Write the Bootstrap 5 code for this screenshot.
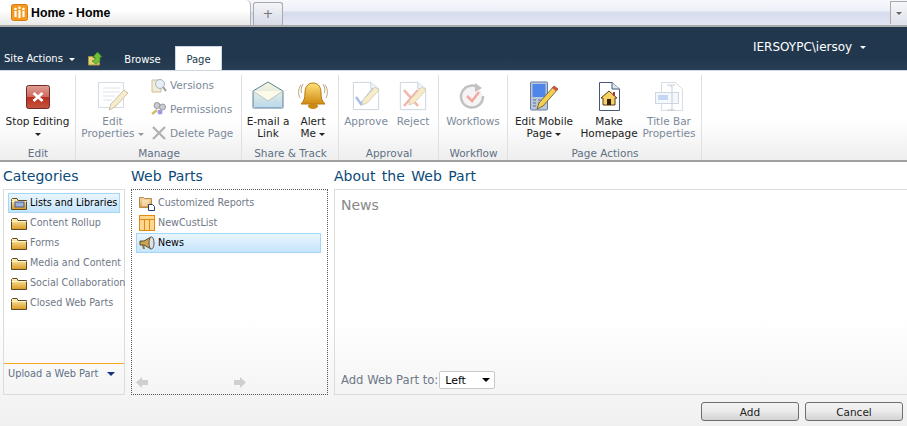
<!DOCTYPE html>
<html lang="en"><head><meta charset="utf-8"><title>Home - Home</title>
<link href="https://cdn.jsdelivr.net/npm/bootstrap@5.3.0/dist/css/bootstrap.min.css" rel="stylesheet">
<style>
html,body{width:907px;height:426px;overflow:hidden;margin:0}
body{font-family:"DejaVu Sans",sans-serif;font-size:10.5px;line-height:12px;color:#222;background:#fff}
.tabstrip{height:27px;background:linear-gradient(#f7f8fc 0,#eef0f8 42%,#d7dcee 50%,#dfe3f2 90%);border-bottom:2px solid #a9a9a9}
.hometab{width:251px;height:25px;background:linear-gradient(#fff,#fff 40%,#e9e9e9);border:1px solid #b4b4b4;border-top:0;border-left:0;border-bottom:0;border-top-right-radius:5px;padding-left:11px;gap:3px;font:700 12.3px/16px "Liberation Sans",sans-serif;color:#000}
.plustab{width:30px;height:23px;margin:2px 0 0 2px;background:linear-gradient(#f4f5f9,#d8dbe6);border:1px solid #a8a8b0;border-bottom:0;border-radius:3px 3px 0 0;color:#777;font-size:13px}
.menutab{width:17px;height:23px;margin-top:1px;background:linear-gradient(#f6f7fa,#dfe2ea);border:1px solid #aaa;border-right:0;border-bottom:0}
.tri{width:0;height:0;border-left:3px solid transparent;border-right:3px solid transparent;border-top:3px solid #222;display:inline-block;vertical-align:middle}
.tri-w{border-top-color:#fff}.tri-g{border-top-color:#999}.tri-m{border-top-color:#666}
.topband{height:44px;background:linear-gradient(#21374d 70%,#273e55);color:#fff;border-bottom:1px solid #cfd8e2}
.actions{padding-left:4px;width:88px;height:12px;margin-bottom:5px;white-space:nowrap;font-size:10px}
.actions .tri{margin-left:3px}
.upicon{margin:0 0 4px 0;flex:none}
.browsetab{width:65px;margin-left:6px;text-align:center;margin-bottom:4px;font-size:10px}
.pagetab{width:47px;height:24px;margin-top:20px;background:#fff;color:#21374d;border:1px solid #cfd8e2;border-bottom:0;text-align:center;padding-top:7px;font-size:10px}
.userbox{position:absolute;left:753px;top:14px;white-space:nowrap;font-size:12px}
.ribbon{height:91px;background:linear-gradient(#fff 55%,#eeeeee);border-bottom:2px solid #a0a0a0}
.rgroup{height:90px;padding-top:4px;position:relative}
.rgroup::after{content:"";position:absolute;right:0;top:4px;bottom:1px;width:1px;background:#e0e0e0}
.g1{width:76px}.g2{width:166px}.g3{width:97px}.g4{width:100px}.g5{width:69px}.g6{width:194px}
.rrow{height:72px}
.rlabel{text-align:center;color:#5f7085}
.bigbtn{text-align:center;padding-top:7px;flex:none;line-height:12px;white-space:nowrap}
.bigbtn svg{display:block;margin:-1px auto 4px}
.bigbtn .stopicon{margin:3px auto 6px}
.off{color:#7d8a9a}
.w75{width:75px}.w73{width:73px}.w52{width:52px}.w38{width:38px}.w54{width:54px}.w40{width:40px}.w68{width:68px}.w72{width:72px}.w58{width:58px}.w62{width:62px}
.smallbtn{height:20px;margin-bottom:4px;padding-left:2px;white-space:nowrap;gap:3px}
.mainzone{height:264px;background:linear-gradient(#fff 60%,#f0f0f0 100%)}
.colhead{font-size:14px;line-height:18px;color:#0b4a78;height:27px;padding-top:5px;word-spacing:2px}
.colcat{width:122px;margin-left:3px}.colparts{width:197px;margin-left:6px}.colabout{margin-left:6px;flex:1}
.panelbox{height:206px;border:1px solid #dcdcdc;position:relative;font-size:9.8px}
.catlist{height:174px;border-bottom:1px solid #f5a623;padding:3px 0 0 4px}
.rowitem{height:20px;padding-left:2px;white-space:nowrap;color:#6f7887;gap:3px;width:112px;border:1px solid transparent;font-size:9.6px}
.rowitem svg{flex:none}
.picked{background:linear-gradient(#eaf6fe,#c4e4fb);border-color:#a6d6f6;color:#000}
.uploadrow{height:31px;padding:4px 0 0 4px;color:#5f7085;white-space:nowrap}
.uploadrow .tri{border-left-width:4px;border-right-width:4px;border-top:4px solid #13317f;margin-left:5px}
.partbox{height:206px;border:1px dotted #555;padding:3px 4px;position:relative}
.partbox .rowitem{width:185px}
.pagers{position:absolute;left:4px;top:187px;width:110px}
.aboutbox{height:206px;border:1px solid #dcdcdc;border-right:0;padding:7px 6px;position:relative}
.newsname{font-size:14px;line-height:17px;color:#888}
.addrow{position:absolute;left:6px;top:181px;color:#6f7887;font-size:11.6px;gap:1px}
.spot{width:56px;height:18px;padding:0 0 0 5px;border:1px solid #c8c8c8;border-radius:2px;font-size:11px;font-family:"DejaVu Sans",sans-serif;line-height:15px;color:#000;background-size:8px 4px;background-position:right 4px center;background-image:url("data:image/svg+xml,%3Csvg xmlns='http://www.w3.org/2000/svg' viewBox='0 0 8 4'%3E%3Cpath d='M0 0h8L4 4z'/%3E%3C/svg%3E")}
.footbtns{height:32px;padding:7px 4px 0 0;gap:6px}
.actbtn{width:98px;height:19px;padding:0;font:400 10.5px/16px "DejaVu Sans",sans-serif;color:#222;border:1px solid #6f6f6f;border-radius:3px;background:linear-gradient(#f3f3f3 0,#ececec 45%,#d2d2d2 100%)}
</style></head>
<body>
<svg width="0" height="0" class="position-absolute"><defs>
<linearGradient id="fg" x1="0" y1="0" x2="0" y2="1"><stop offset="0" stop-color="#fff2b8"/><stop offset="1" stop-color="#d99a20"/></linearGradient>
<linearGradient id="env" x1="0" y1="0" x2="0" y2="1"><stop offset="0" stop-color="#fbf7dc"/><stop offset="1" stop-color="#b9d9ee"/></linearGradient>
<linearGradient id="bell" x1="0" y1="0" x2="0" y2="1"><stop offset="0" stop-color="#ffe27a"/><stop offset="1" stop-color="#d08a10"/></linearGradient>
<linearGradient id="sel" x1="0" y1="0" x2="0" y2="1"><stop offset="0" stop-color="#f9d9a0"/><stop offset="1" stop-color="#e0a050"/></linearGradient>
<linearGradient id="stp" x1="0" y1="0" x2="0" y2="1"><stop offset="0" stop-color="#dfa098"/><stop offset=".5" stop-color="#d0675c"/><stop offset=".5" stop-color="#b8301f"/><stop offset="1" stop-color="#c4553f"/></linearGradient>
<symbol id="folder" viewBox="0 0 16 13"><path d="M.5 2.500V12.500H15.500V3.500H7L6 1.500H1.500z" fill="url(#fg)" stroke="#5a4a2a"/><path d="M.5 4.500h15" stroke="#fff6c8"/></symbol>
<symbol id="sheet" viewBox="0 0 30 32"><path d="M1.500 1.500H20L28.500 8V30.500H1.500z" fill="#fff" stroke="#c9d2dc"/><path d="M20 1.500V8h8.500" fill="#eef2f6" stroke="#c9d2dc"/></symbol>
</defs></svg>

<div class="tabstrip d-flex justify-content-between">
  <div class="d-flex">
    <div class="hometab d-flex align-items-center">
      <svg width="17" height="17" viewBox="0 0 17 17"><rect x=".5" y=".5" width="16" height="16" rx="2" fill="#f59a1e" stroke="#d87a0c"/><g fill="#fff"><circle cx="4.500" cy="5" r="1.300"/><circle cx="8.500" cy="3.800" r="1.300"/><circle cx="12.500" cy="5" r="1.300"/><rect x="3.400" y="7" width="2.200" height="6"/><rect x="7.400" y="6" width="2.200" height="8"/><rect x="11.400" y="7" width="2.200" height="6"/></g></svg>
      <span>Home - Home</span>
    </div>
    <div class="plustab d-flex align-items-center justify-content-center">+</div>
  </div>
  <div class="menutab d-flex align-items-center justify-content-center"><span class="tri tri-m"></span></div>
</div>

<div class="topband d-flex align-items-end position-relative">
  <div class="actions">Site Actions <span class="tri tri-w"></span></div>
  <svg class="upicon" width="16" height="15" viewBox="0 0 16 15"><path d="M.5 5.500h4l1 1.500h6v7H.5z" fill="#e8cf7c" stroke="#a89344"/><path d="M4 10l3-1V6H5l4.500-5L14 6h-2v4l-4 3z" fill="#6fc23a" stroke="#3f8a1c" stroke-width=".7"/></svg>
  <div class="browsetab">Browse</div>
  <div class="pagetab">Page</div>
  <div class="userbox">IERSOYPC\iersoy <span class="tri tri-w ms-1"></span></div>
</div>

<div class="ribbon d-flex">
  <div class="rgroup g1">
    <div class="rrow d-flex">
      <div class="bigbtn w75">
        <svg class="stopicon" width="24" height="24" viewBox="0 0 24 24"><rect x=".5" y=".5" width="23" height="23" rx="2" fill="url(#stp)" stroke="#6e2b28"/><path d="M7.500 8l9 8M16.500 8l-9 8" stroke="#fff" stroke-width="2.800"/></svg>
        Stop Editing<br><span class="tri"></span>
      </div>
    </div>
    <div class="rlabel">Edit</div>
  </div>
  <div class="rgroup g2">
    <div class="rrow d-flex">
      <div class="bigbtn w73 off">
        <svg width="32" height="30" viewBox="0 0 32 30"><path d="M1.500 1.500H26.500V26.500H1.500z" fill="#fff" stroke="#d5dbe2"/><path d="M6 7h17M6 11h17M6 15h12M6 19h9" stroke="#dde3ea"/><path d="M27 9l4 3-13 14-6 3 2-6z" fill="#f8ebc8" stroke="#c9c2ae"/></svg>
        Edit<br>Properties <span class="tri tri-g"></span>
      </div>
      <div class="off">
        <div class="smallbtn d-flex align-items-center">
          <svg width="16" height="16" viewBox="0 0 16 16"><path d="M1 3h9v12H1z" fill="#f3ecd6" stroke="#cdbf9a"/><circle cx="9" cy="7" r="4.500" fill="#e6eef6" stroke="#a7b4c1"/><path d="M12 10l3 4" stroke="#9a9a9a" stroke-width="2"/></svg>
          Versions</div>
        <div class="smallbtn d-flex align-items-center">
          <svg width="16" height="16" viewBox="0 0 16 16"><circle cx="6" cy="4.500" r="3" fill="#c9ccd4" stroke="#999"/><circle cx="11.500" cy="6" r="3" fill="#c9ccd4" stroke="#999"/><circle cx="9" cy="11" r="2.500" fill="#9a9ee0"/><path d="M1 13l5-4" stroke="#d9bb66" stroke-width="2.500"/></svg>
          Permissions</div>
        <div class="smallbtn d-flex align-items-center">
          <svg width="16" height="16" viewBox="0 0 16 16"><path d="M2 2l12 12M14 2L2 14" stroke="#b0b0b0" stroke-width="2.200"/></svg>
          Delete Page</div>
      </div>
    </div>
    <div class="rlabel">Manage</div>
  </div>
  <div class="rgroup g3">
    <div class="rrow d-flex">
      <div class="bigbtn w52">
        <svg width="32" height="30" viewBox="0 0 32 30"><path d="M1 10L16 1l15 9v17H1z" fill="url(#env)" stroke="#5f7f97"/><path d="M1 10l15 10 15-10" fill="#fdfbe8" stroke="#b9c6cc"/><path d="M1 27l11-10M31 27L20 17" stroke="#c5d8e6"/></svg>
        E-mail a<br>Link
      </div>
      <div class="bigbtn w38">
        <svg width="30" height="30" viewBox="0 0 30 30"><path d="M15 2c-6 0-8 5-8 10 0 5-1 8-4 11h24c-3-3-4-6-4-11 0-5-2-10-8-10z" fill="url(#bell)" stroke="#b67a12"/><ellipse cx="15" cy="25" rx="5" ry="3" fill="#c98a16"/><path d="M3 4C0 8 0 13 2 17M27 4c3 4 3 9 1 13M5 3C3 6 3 9 3.500 12M25 3c2 3 2 6 1.500 9" fill="none" stroke="#b8a578"/></svg>
        Alert<br>Me <span class="tri"></span>
      </div>
    </div>
    <div class="rlabel">Share &amp; Track</div>
  </div>
  <div class="rgroup g4">
    <div class="rrow d-flex">
      <div class="bigbtn w54 off">
        <svg width="30" height="30" viewBox="0 0 30 30"><use href="#sheet" width="30" height="30"/><path d="M5 16l5 7L22 8" fill="none" stroke="#a9bde8" stroke-width="2.500"/><path d="M24 6l4 3-12 13-5 2 1-5z" fill="#f8ebc8" stroke="#d8d2bc"/></svg>
        Approve
      </div>
      <div class="bigbtn w40 off">
        <svg width="30" height="30" viewBox="0 0 30 30"><use href="#sheet" width="30" height="30"/><path d="M6 9l14 16M20 9L6 25" fill="none" stroke="#f2b5ac" stroke-width="2.500"/><path d="M24 6l4 3-12 13-5 2 1-5z" fill="#f8ebc8" stroke="#d8d2bc"/></svg>
        Reject
      </div>
    </div>
    <div class="rlabel">Approval</div>
  </div>
  <div class="rgroup g5">
    <div class="rrow d-flex">
      <div class="bigbtn w68 off">
        <svg width="30" height="30" viewBox="0 0 30 30"><path d="M22 8a11 11 0 1 0 3 7" fill="#f4f4f4" stroke="#c2c2c2" stroke-width="2.500"/><path d="M17 2l7 5-7 4z" fill="#c2c2c2"/><path d="M9 15l5 5 7-9" fill="none" stroke="#f0a8a0" stroke-width="2.500"/></svg>
        Workflows
      </div>
    </div>
    <div class="rlabel">Workflow</div>
  </div>
  <div class="rgroup g6">
    <div class="rrow d-flex">
      <div class="bigbtn w72">
        <svg width="30" height="30" viewBox="0 0 30 30"><rect x="1.500" y="1" width="17" height="28" rx="1" fill="#b8c6dc" stroke="#6a7d9e"/><rect x="3.500" y="3" width="13" height="13" fill="#4f86ea"/><path d="M4 19h3M9 19h3M4 22h3M9 22h3M4 25h3" stroke="#7f8ca0" stroke-width="1.500"/><path d="M25 5l4 3-15 17-6 3 2-6z" fill="#f6cf52" stroke="#7a6a3a"/><path d="M25 5l4 3-2 2-4-3z" fill="#d0524a"/></svg>
        Edit Mobile<br>Page <span class="tri"></span>
      </div>
      <div class="bigbtn w58">
        <svg width="30" height="30" viewBox="0 0 30 30"><path d="M5.500 1.500H18L25.500 8V29.500H5.500z" fill="#fff" stroke="#46597a"/><path d="M18 1.500V8h7.500" fill="#dfe7f2" stroke="#46597a"/><path d="M15 10l-8 7h2v7h12v-7h2z" fill="#f7d063" stroke="#5a3d12"/><rect x="13" y="18" width="4" height="6" fill="#33210b"/><rect x="19" y="11" width="2" height="4" fill="#a33"/></svg>
        Make<br>Homepage
      </div>
      <div class="bigbtn w62 off">
        <svg width="30" height="30" viewBox="0 0 30 30"><path d="M7.500 1.500H21L28.500 8V29.500H7.500z" fill="#fff" stroke="#d6dde5"/><rect x="1.500" y="11.500" width="23" height="11" fill="#f4f7fb" stroke="#cdd7e2"/><rect x="4" y="14" width="10" height="5" fill="#c4d6f2"/><path d="M16 5h2v24h-2M13 4h8M13 29h8" fill="none" stroke="#c7ced6"/></svg>
        Title Bar<br>Properties
      </div>
    </div>
    <div class="rlabel">Page Actions</div>
  </div>
</div>

<div class="mainzone">
  <div class="d-flex">
    <div class="colcat">
      <div class="colhead">Categories</div>
      <div class="panelbox">
        <div class="catlist">
          <div class="rowitem picked d-flex align-items-center"><svg width="16" height="13"><use href="#folder"/><rect x="4" y="5" width="9" height="5" fill="#9db1dc" stroke="#4a5a8c"/></svg>Lists and Libraries</div>
          <div class="rowitem d-flex align-items-center"><svg width="16" height="13"><use href="#folder"/></svg>Content Rollup</div>
          <div class="rowitem d-flex align-items-center"><svg width="16" height="13"><use href="#folder"/></svg>Forms</div>
          <div class="rowitem d-flex align-items-center"><svg width="16" height="13"><use href="#folder"/></svg>Media and Content</div>
          <div class="rowitem d-flex align-items-center"><svg width="16" height="13"><use href="#folder"/></svg>Social Collaboration</div>
          <div class="rowitem d-flex align-items-center"><svg width="16" height="13"><use href="#folder"/></svg>Closed Web Parts</div>
        </div>
        <div class="uploadrow">Upload a Web Part <span class="tri"></span></div>
      </div>
    </div>
    <div class="colparts">
      <div class="colhead">Web Parts</div>
      <div class="partbox">
        <div class="rowitem d-flex align-items-center"><svg width="16" height="16" viewBox="0 0 16 16"><path d="M.5 2.500h4l1 1h7v9H.5z" fill="url(#sel)" stroke="#b08a50"/><path d="M3 6h7M3 8h7M3 10h5" stroke="#fff3d8"/><path d="M9.500 9.500h4l2 2v4h-6z" fill="#fff" stroke="#2c3e70"/></svg>Customized Reports</div>
        <div class="rowitem d-flex align-items-center"><svg width="16" height="16" viewBox="0 0 16 16"><rect x=".5" y=".5" width="15" height="15" fill="#ffd68f" stroke="#e08a14"/><path d="M.5 4.500h15M5.500 4.500v11M10.500 4.500v11" stroke="#e08a14"/></svg>NewCustList</div>
        <div class="rowitem picked d-flex align-items-center"><svg width="16" height="14" viewBox="0 0 16 14"><path d="M1 5h4l7-4v12L5 9H1z" fill="#c9a552" stroke="#5a4b2a"/><ellipse cx="12.500" cy="7" rx="2.500" ry="6" fill="#e2e2e2" stroke="#555"/><path d="M3 9l1 4h2l-1-4z" fill="#8a7440"/></svg>News</div>
        <div class="pagers d-flex justify-content-between">
          <svg width="12" height="11" viewBox="0 0 12 11"><path d="M0 5.500L6 0v3h6v5H6v3z" fill="#cfcfcf"/></svg>
          <svg width="12" height="11" viewBox="0 0 12 11"><path d="M12 5.500L6 0v3H0v5h6v3z" fill="#cfcfcf"/></svg>
        </div>
      </div>
    </div>
    <div class="colabout">
      <div class="colhead">About the Web Part</div>
      <div class="aboutbox">
        <div class="newsname">News</div>
        <div class="addrow d-flex align-items-center"><span>Add Web Part to:</span>
          <select class="form-select spot" aria-label="Add Web Part to"><option>Left</option></select>
        </div>
      </div>
    </div>
  </div>
  <div class="footbtns d-flex justify-content-end">
    <button type="button" class="btn actbtn">Add</button>
    <button type="button" class="btn actbtn">Cancel</button>
  </div>
</div>
</body></html>
